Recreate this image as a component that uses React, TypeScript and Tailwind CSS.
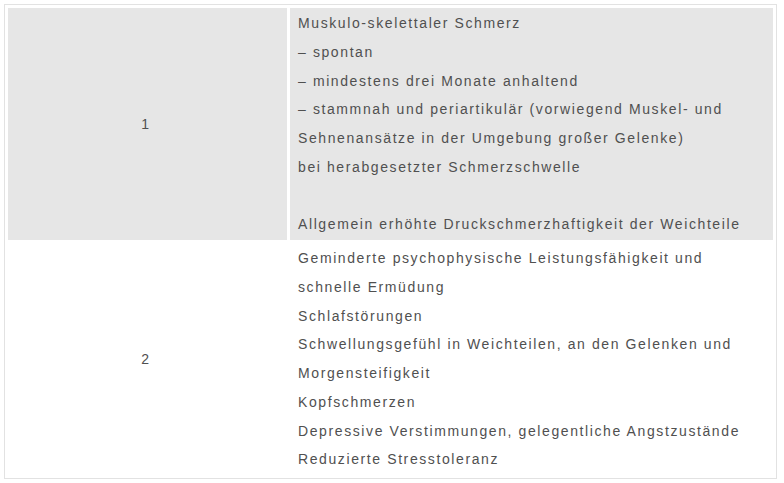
const rows = [
  {
    num: "1",
    shaded: true,
    lines: [
      "Muskulo-skelettaler Schmerz",
      "– spontan",
      "– mindestens drei Monate anhaltend",
      "– stammnah und periartikulär (vorwiegend Muskel- und",
      "Sehnenansätze in der Umgebung großer Gelenke)",
      "bei herabgesetzter Schmerzschwelle",
      "",
      "Allgemein erhöhte Druckschmerzhaftigkeit der Weichteile",
    ],
  },
  {
    num: "2",
    shaded: false,
    lines: [
      "Geminderte psychophysische Leistungsfähigkeit und",
      "schnelle Ermüdung",
      "Schlafstörungen",
      "Schwellungsgefühl in Weichteilen, an den Gelenken und",
      "Morgensteifigkeit",
      "Kopfschmerzen",
      "Depressive Verstimmungen, gelegentliche Angstzustände",
      "Reduzierte Stresstoleranz",
    ],
  },
];

export default function App() {
  return (
    <div className="min-h-[483px] bg-white pl-[4px] pt-[4px] font-['Liberation_Sans',Arial,sans-serif] text-[14px] leading-[28.75px] tracking-[1.6px] text-[#505050]">
      <table className="w-[773px] border-separate border-spacing-[3px] border border-[#e2e2e2]">
        <tbody>
          {rows.map((row) => (
            <tr key={row.num}>
              <td
                className={
                  row.shaded
                    ? "w-[279px] bg-[#e6e6e6] pr-[3px] text-center align-middle"
                    : "w-[279px] pr-[3px] text-center align-middle"
                }
              >
                {row.num}
              </td>
              <td
                className={
                  row.shaded
                    ? "bg-[#e6e6e6] pl-[8px] pr-[6px] py-px align-top"
                    : "pl-[8px] pr-[6px] py-px align-top"
                }
              >
                {row.lines.map((line, i) => (
                  <div key={i} className="whitespace-nowrap">
                    {line || "\u00a0"}
                  </div>
                ))}
              </td>
            </tr>
          ))}
        </tbody>
      </table>
    </div>
  );
}
